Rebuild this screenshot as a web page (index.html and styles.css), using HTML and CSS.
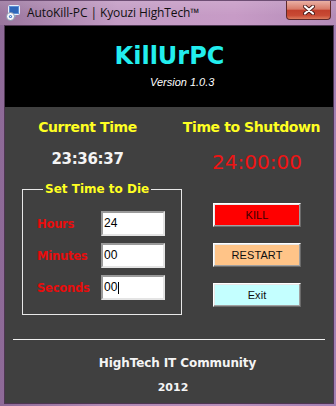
FILE: index.html
```html
<!DOCTYPE html>
<html>
<head>
<meta charset="utf-8">
<link rel="stylesheet" href="styles.css">
</head>
<body>
<div class="window">
  <div class="titlebar">
    <svg class="app-icon" width="16" height="16" viewBox="0 0 16 16">
      <rect x="3.5" y="0.5" width="11" height="9" rx="1" fill="#5b8fd6" stroke="#e8f0fa"/>
      <rect x="5" y="2" width="8" height="6" fill="#2f66b8"/>
      <rect x="7" y="10" width="4" height="2" fill="#8aa0c0"/>
      <circle cx="5.5" cy="11.5" r="4" fill="#f4f6fa" stroke="#7a8aa0" stroke-width="0.8"/>
      <circle cx="5.5" cy="11.5" r="1.6" fill="#4a7cc8"/>
      <circle cx="5.5" cy="11.5" r="0.6" fill="#fff"/>
    </svg>
    <span class="title">AutoKill-PC | Kyouzi HighTech™</span>
    <div class="close">
      <svg width="12" height="10" viewBox="0 0 12 10">
        <path d="M2 1.5 L10 8.5 M10 1.5 L2 8.5" stroke="#4a1a18" stroke-width="4" stroke-linecap="round"/>
        <path d="M2 1.5 L10 8.5 M10 1.5 L2 8.5" stroke="#ffffff" stroke-width="2.2" stroke-linecap="round"/>
      </svg>
    </div>
  </div>
  <div class="client">
    <header class="banner">
      <h1 class="brand">KillUrPC</h1>
      <p class="version">Version 1.0.3</p>
    </header>
    <main class="panel">
      <section class="clocks">
        <div class="clock">
          <h2 class="clock-label">Current Time</h2>
          <div class="time now">23:36:37</div>
        </div>
        <div class="clock">
          <h2 class="clock-label">Time to Shutdown</h2>
          <div class="time remaining">24:00:00</div>
        </div>
      </section>
      <section class="controls">
        <fieldset class="group">
          <legend class="group-title">Set Time to Die</legend>
          <div class="field"><span class="field-label">Hours</span><div class="textbox">24</div></div>
          <div class="field"><span class="field-label">Minutes</span><div class="textbox">00</div></div>
          <div class="field"><span class="field-label">Seconds</span><div class="textbox">00<span class="caret"></span></div></div>
        </fieldset>
        <div class="actions">
          <button class="btn kill">KILL</button>
          <button class="btn restart">RESTART</button>
          <button class="btn exit">Exit</button>
        </div>
      </section>
      <hr class="sep">
      <footer class="credits">
        <p class="org">HighTech IT Community</p>
        <p class="year">2012</p>
      </footer>
    </main>
  </div>
</div>
</body>
</html>
```
FILE: styles.css
```css
* { box-sizing: border-box; }
html, body { margin: 0; padding: 0; }
body { width: 336px; height: 406px; overflow: hidden; background: #9c80ae; }

.window {
  width: 336px;
  height: 406px;
  display: flex;
  flex-direction: column;
  background: linear-gradient(to right, #8e6a98, #b088b4 30%, #b88fbc 70%, #a27fb4);
}

.titlebar {
  height: 25px;
  display: flex;
  align-items: center;
  background:
    linear-gradient(to bottom, rgba(255,255,255,0.12), rgba(255,255,255,0) 60%),
    linear-gradient(to right, #9a769e, #c39cc4 35%, #c79bc6 70%, #b48cb8);
  border-top: 1px solid #6e4e74;
}
.app-icon { margin-left: 5px; flex: none; }
.title {
  margin-left: 6px;
  font-family: "Open Sans", "Noto Sans", sans-serif;
  font-size: 12px;
  line-height: 24px;
  color: #101010;
  letter-spacing: -0.1px;
  white-space: nowrap;
}
.close {
  margin-left: auto;
  margin-right: 5px;
  align-self: flex-start;
  width: 45px;
  height: 19px;
  border: 1px solid #5e2a2a;
  border-top: none;
  border-radius: 0 0 4px 4px;
  background: linear-gradient(to bottom, #eab0a4, #d87a68 45%, #c2402c 52%, #c84a34 80%, #dc7a5c);
  display: flex;
  align-items: center;
  justify-content: center;
}

.client {
  margin: 0 2px 2px 4px;
  flex: 1;
  border: 1px solid #4e3652;
  display: flex;
  flex-direction: column;
}

.banner {
  height: 81px;
  background: #000;
  flex: none;
}
.brand {
  margin: 16px 0 0 0;
  text-align: center;
  font-family: "DejaVu Sans", sans-serif;
  font-weight: bold;
  font-size: 24px;
  line-height: 28px;
  color: #22eeee;
  padding-left: 1px;
}
.version {
  margin: 5px 0 0 145px;
  font-family: "Liberation Sans", sans-serif;
  font-style: italic;
  font-size: 11px;
  line-height: 14px;
  color: #fff;
}

.panel {
  flex: 1;
  background: #404040;
  padding-top: 12px;
}

.clocks {
  display: grid;
  grid-template-columns: 165px 163px;
  align-items: start;
}
.clock { text-align: center; }
.clock-label {
  margin: 0;
  font-family: "DejaVu Sans", sans-serif;
  font-weight: bold;
  font-size: 14px;
  line-height: 17px;
  letter-spacing: -0.4px;
  color: #ffff22;
}
.time { margin-top: 14px; font-family: "DejaVu Sans", sans-serif; }
.now {
  font-weight: bold;
  font-size: 15px;
  line-height: 18px;
  letter-spacing: -0.3px;
  color: #f4f4f4;
}
.remaining {
  font-size: 20px;
  line-height: 24px;
  color: #ee1414;
  padding-left: 11px;
}

.controls {
  display: flex;
  align-items: flex-start;
  margin-top: 8px;
  padding-left: 17px;
}
.group {
  margin: 0;
  width: 160px;
  padding: 15px 0 14px 14px;
  border: 1px solid #e8e8e8;
  display: flex;
  flex-direction: column;
  gap: 7px;
}
.group-title {
  margin-left: 6px;
  padding: 0 2px;
  font-family: "DejaVu Sans", sans-serif;
  font-weight: bold;
  font-size: 12px;
  line-height: 14px;
  color: #ffff22;
}
.field {
  display: flex;
  align-items: center;
  height: 25px;
}
.field-label {
  width: 64px;
  font-family: "DejaVu Sans", sans-serif;
  font-weight: bold;
  font-size: 11.5px;
  color: #e80c0c;
  letter-spacing: -0.2px;
}
.textbox {
  width: 64px;
  height: 25px;
  background: #fff;
  border: 2px solid;
  border-color: #9a9a9a #e4e4e4 #e4e4e4 #9a9a9a;
  padding-left: 1px;
  font-family: "Liberation Sans", sans-serif;
  font-size: 12px;
  line-height: 21px;
  color: #000;
  display: flex;
  align-items: center;
}
.caret {
  display: inline-block;
  width: 1px;
  height: 12px;
  background: #000;
  margin-left: 1px;
}

.actions {
  margin-left: 31px;
  margin-top: 21px;
  display: flex;
  flex-direction: column;
  gap: 16px;
}
.btn {
  width: 88px;
  height: 24px;
  margin: 0;
  padding: 0;
  border: 1px solid;
  border-color: #ffffff #6a6a6a #6a6a6a #ffffff;
  box-shadow: inset -1px -1px 0 #a0a0a0, inset 1px 1px 0 #e8e8e8;
  font-family: "Liberation Sans", sans-serif;
  font-size: 11px;
  color: #101010;
  letter-spacing: 0.1px;
}
.kill { background: #ff0000; color: #3a0000; }
.restart { background: #ffc488; }
.exit { background: #c4ffff; }

.sep {
  margin: 24px 8px 0 8px;
  border: none;
  border-top: 1px solid #f0f0f0;
  height: 0;
}

.credits { text-align: center; font-family: "DejaVu Sans", sans-serif; font-weight: bold; color: #f4f4f4; }
.org {
  margin: 16px 0 0 0;
  padding-left: 17px;
  font-size: 12px;
  line-height: 15px;
  letter-spacing: -0.1px;
}
.year {
  margin: 9px 0 0 0;
  padding-left: 8px;
  font-size: 11px;
  line-height: 15px;
}
```
